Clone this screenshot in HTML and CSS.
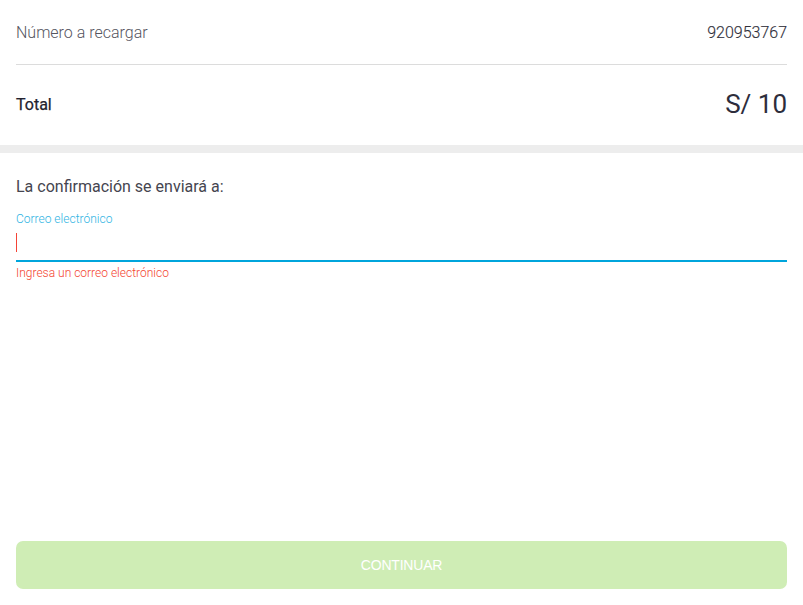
FILE: index.html
```html
<!DOCTYPE html>
<html lang="es">
<head>
<meta charset="utf-8">
<title>Recarga</title>
<link rel="stylesheet" href="styles.css">
</head>
<body>
<div class="page">
  <section class="summary">
    <div class="row row-number">
      <span class="label-light">Número a recargar</span>
      <span class="value">920953767</span>
    </div>
    <div class="row row-total">
      <span class="total-label">Total</span>
      <span class="total-value">S/ 10</span>
    </div>
  </section>
  <div class="band"></div>
  <section class="confirm">
    <p class="confirm-title">La confirmación se enviará a:</p>
    <div class="field">
      <label class="field-label" for="email">Correo electrónico</label>
      <div class="field-input">
        <span class="caret"></span>
      </div>
      <div class="field-error">Ingresa un correo electrónico</div>
    </div>
  </section>
  <div class="spacer"></div>
  <div class="actions">
    <button class="btn" disabled>CONTINUAR</button>
  </div>
</div>
</body>
</html>
```
FILE: styles.css
```css
* { box-sizing: border-box; }
html, body { margin: 0; padding: 0; background: #fff; }
body {
  font-family: Roboto, "Noto Sans", sans-serif;
  color: #33333f;
}
.page {
  width: 803px;
  height: 605px;
  display: flex;
  flex-direction: column;
}
.summary { padding: 0 16px; }
.row {
  display: flex;
  justify-content: space-between;
  align-items: center;
}
.row-number {
  height: 65px;
  border-bottom: 1px solid #dcdcdc;
  padding-top: 1px;
}
.label-light {
  font-size: 16px;
  font-weight: 300;
  color: #555560;
}
.value {
  font-size: 16px;
  font-weight: 300;
  color: #30303b;
  -webkit-text-stroke: 0.15px #30303b;
}
.row-total {
  height: 80px;
  padding-bottom: 2px;
}
.total-label {
  font-size: 16px;
  font-weight: 400;
  color: #22222e;
  -webkit-text-stroke: 0.25px #22222e;
}
.total-value {
  font-size: 26px;
  font-weight: 400;
  color: #2d2d3c;
}
.band {
  height: 8px;
  background: #ededed;
}
.confirm { padding: 0 16px; }
.confirm-title {
  margin: 24px 0 0;
  font-size: 16px;
  line-height: 20px;
  font-weight: 400;
  color: #45454f;
}
.field { margin-top: 15px; }
.field-label {
  display: block;
  font-size: 12px;
  line-height: 14px;
  font-weight: 300;
  color: #2fb4e3;
}
.field-input {
  height: 36px;
  border-bottom: 2px solid #00a5dc;
  padding-top: 7px;
}
.caret {
  display: block;
  width: 1px;
  height: 19px;
  background: #f44336;
}
.field-error {
  margin-top: 4px;
  font-size: 12px;
  line-height: 14px;
  font-weight: 300;
  color: #f4432f;
}
.spacer { flex: 1; }
.actions { padding: 0 16px 16px; }
.btn {
  width: 100%;
  height: 48px;
  border: none;
  border-radius: 7px;
  background: #cfedb5;
  color: #fff;
  font-family: "Liberation Sans", Arial, sans-serif;
  font-size: 14px;
  letter-spacing: -0.2px;
}
```
